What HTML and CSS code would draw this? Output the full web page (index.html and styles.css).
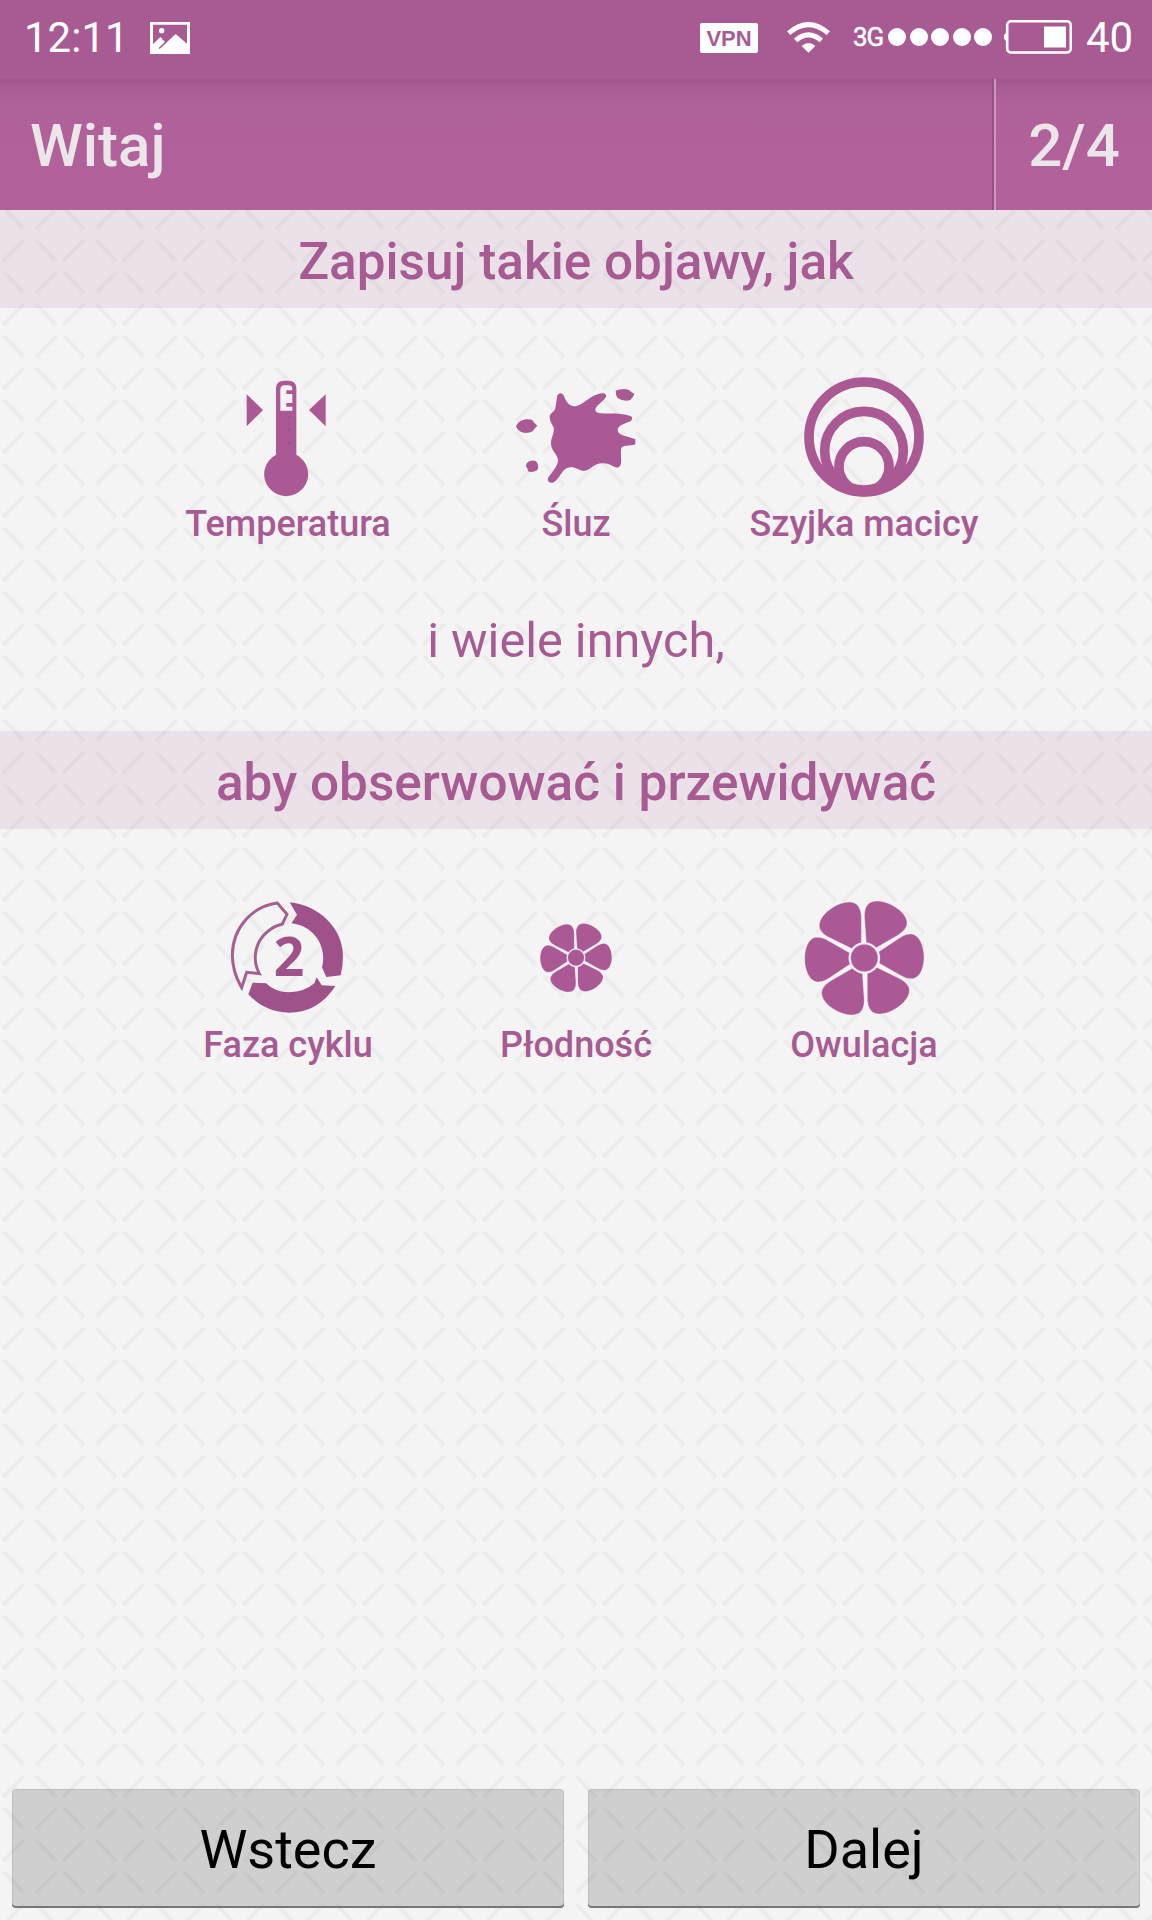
FILE: index.html
```html
<!DOCTYPE html>
<html lang="pl">
<head>
    <meta charset="UTF-8">
    <title>Witaj</title>
    <link rel="stylesheet" href="styles.css">
</head>
<body>
    <div class="status">
        <span class="time">12:11</span>
        <svg class="pic" viewBox="0 0 120 96">
            <path fill="#fff" fill-rule="evenodd" d="M0 0H120V96H0ZM9 8V67L31 45L38 51L33 56L38 53L45 59L26 78L29 81L77 36L111 65V8Z"/>
            <circle cx="35" cy="26" r="8" fill="#fff"/>
        </svg>
        <span class="vpn">VPN</span>
        <svg class="wifi" viewBox="0 0 130 94">
            <g fill="none" stroke="#fff" stroke-width="15">
                <path d="M5 34Q65 -18 125 34"/>
                <path d="M26 56Q65 22 104 56"/>
            </g>
            <path fill="#fff" d="M44 73Q65 55 86 73L65 93Z"/>
        </svg>
        <span class="net">3G</span>
        <span class="dots"><i></i><i></i><i></i><i></i><i></i></span>
        <svg class="battery" viewBox="0 0 68 34">
            <rect x="3.2" y="1.2" width="63.6" height="31.3" rx="4" fill="none" stroke="#fff" stroke-width="2.6"/>
            <path fill="#fff" d="M2 13V21L0 19V15ZM40 6.500H62V27.500H40Z"/>
        </svg>
        <span class="level">40</span>
    </div>
    <div class="bar">
        <h1>Witaj</h1>
        <span class="page">2/4</span>
    </div>
    <div class="content">
        <h2>Zapisuj takie objawy, jak</h2>
        <ul class="items">
            <li>
                <svg viewBox="144 51 360 360">
                    <path fill="#ab5994" d="M200 103L249 150L200 199ZM437 103L387 150L437 199ZM288 284V84Q289 62 312 62H325Q348 62 349 84V284A66 66 0 1 1 288 284Z"/>
                    <path fill="#f7f2f6" d="M301 152V88Q302 76 314 76H325Q337 76 337 88V91H319V102H337V129H319V140H337V152Z"/>
                    <path stroke="#8f5a82" stroke-width="7" d="M322 172H333M322 210H333M322 248H333"/>
                </svg>
                <span>Temperatura</span>
            </li>
            <li>
                <svg viewBox="48 51 360 360">
                    <g fill="#ab5994">
                        <path d="M172 106Q182 94 191 106C198 124 205 137 222 139C250 139 264 107 305 100Q320 99 318 110C310 126 285 136 286 151Q288 160 303 160C330 162 365 157 393 169Q400 175 393 182C380 190 352 194 353 211C356 229 384 228 406 238V253C390 261 364 251 363 270C361 290 370 319 353 323C337 321 332 310 309 310C279 310 273 331 251 333C232 330 229 321 210 322C184 325 181 357 159 368Q145 371 143 357C151 340 176 320 174 298C168 279 153 271 153 250C153 232 164 221 161 202C154 189 149 184 149 168C153 157 164 156 166 144Z"/>
                        <path d="M48 199C55 181 75 174 96 179Q101 187 112 197Q103 205 98 214C79 223 56 220 48 199Z"/>
                        <path d="M80 310Q91 297 108 304Q119 315 112 330Q98 339 84 334Q83 325 78 319Z"/>
                        <path d="M347 92Q369 83 387 90Q394 98 403 101Q399 113 391 120Q370 126 352 113Q347 105 347 92Z"/>
                    </g>
                </svg>
                <span>Śluz</span>
            </li>
            <li>
                <svg viewBox="192 51 360 360">
                    <g fill="none" stroke="#ab5994" stroke-width="29">
                        <circle cx="372" cy="231" r="165"/>
                        <circle cx="372" cy="272" r="118"/>
                        <circle cx="372" cy="320" r="75"/>
                    </g>
                    <path fill="#ab5994" d="M228 305L258 335L302 338A72 72 0 0 0 442 338L486 335L516 305L480 370L420 400H324L264 370Z"/>
                </svg>
                <span>Szyjka macicy</span>
            </li>
        </ul>
        <p>i wiele innych,</p>
        <h2>aby obserwować i przewidywać</h2>
        <ul class="items">
            <li>
                <svg viewBox="114 54 360 360">
                    <path fill="#9f5189" d="M299 67C385 76 458 142 459 228Q459 260 452 286L409 291L396 262Q401 245 399 225C396 175 355 135 304 130L321 104ZM188 308L228 310Q255 337 297 337Q345 335 373 310L380 292L395 316L436 318C400 375 350 398 297 398C245 396 205 375 175 343Z"/>
                    <path fill="none" stroke="#a5608f" stroke-width="9" d="M262 69C190 78 128 140 127 225Q127 275 155 323L170 277L208 281Q194 255 196 225C200 180 230 145 277 132L291 103Z"/>
                    <text x="297" y="288" text-anchor="middle">2</text>
                </svg>
                <span>Faza cyklu</span>
            </li>
            <li>
                <svg viewBox="-300 -299 600 600">
                    <defs>
                        <path id="petal" d="M44 -17L105 -55Q126 -69 144 -67C168 -63 179 -30 179 0C179 30 168 63 144 67Q126 69 105 55L44 17Q50 0 44 -17Z"/>
                        <g id="flower" fill="#ab5994" stroke="#f8eef6" stroke-width="1">
                            <use href="#petal" transform="rotate(-2)"/>
                            <use href="#petal" transform="rotate(58)"/>
                            <use href="#petal" transform="rotate(118)"/>
                            <use href="#petal" transform="rotate(178)"/>
                            <use href="#petal" transform="rotate(238)"/>
                            <use href="#petal" transform="rotate(298)"/>
                            <circle r="41"/>
                        </g>
                    </defs>
                    <use href="#flower"/>
                </svg>
                <span>Płodność</span>
            </li>
            <li>
                <svg viewBox="-181 -180 360 360"><use href="#flower"/></svg>
                <span>Owulacja</span>
            </li>
        </ul>
    </div>
    <div class="buttons">
        <button>Wstecz</button>
        <button>Dalej</button>
    </div>
</body>
</html>
```
FILE: styles.css
```css
* {
    margin: 0;
    padding: 0;
    box-sizing: border-box;
    list-style: none;
}
body{
    width: 1152px;
    height: 1920px;
    display: flex;
    flex-direction: column;
    overflow: hidden;
    font-family: Roboto, sans-serif;
    color: #a85a93;
    background: #f4f4f4 url("data:image/svg+xml,%3Csvg xmlns='http://www.w3.org/2000/svg' width='60' height='64'%3E%3Cpath d='M4 4L24 25M57 4L36 25M24 36L3 57M36 36L56 57' stroke='%23ececec' stroke-width='4' fill='none'/%3E%3C/svg%3E") 0 12px;
}
/* 状态栏 */
.status{
    height: 79px;
    flex: none;
    display: flex;
    align-items: center;
    padding: 0 20px 5px 24px;
    background: #a85b92;
    color: #fff;
}
.time{
    font-size: 42px;
    width: 126px;
}
.pic{
    width: 40px;
    height: 32px;
    margin-top: 2px;
}
.vpn{
    width: 58px;
    height: 30px;
    line-height: 31px;
    margin-left: auto;
    margin-top: 2px;
    border-radius: 2px;
    background: #fff;
    color: #a85b92;
    font-family: "Liberation Sans", sans-serif;
    font-weight: bold;
    font-size: 22px;
    text-align: center;
}
.wifi{
    width: 43px;
    height: 31px;
    margin-left: 29px;
}
.net{
    width: 35px;
    margin-left: 23px;
    font-size: 26px;
    letter-spacing: -1px;
    -webkit-text-stroke: .5px #fff;
}
.dots{
    display: flex;
    gap: 3.500px;
}
.dots i{
    width: 18px;
    height: 18px;
    border-radius: 50%;
    background: #fff;
}
.battery{
    width: 68px;
    height: 34px;
    margin-left: 12px;
}
.level{
    width: 46px;
    margin-left: 14px;
    font-size: 42px;
}
/* 标题栏 */
.bar{
    height: 131px;
    flex: none;
    display: flex;
    align-items: center;
    background: linear-gradient(#a2568c, #a95c93 9px, #b1619a 26px, #b1619a 40px, #b2619b);
    color: #eae6ea;
    font-size: 60px;
    font-weight: 500;
}
.bar h1{
    flex: 1;
    padding: 2px 0 0 30px;
    font-size: 60px;
    font-weight: 500;
}
.page{
    width: 158px;
    height: 131px;
    line-height: 133px;
    text-align: center;
    border-left: 2px solid #cf97c0;
    box-shadow: -2px 0 0 #8f5380;
}
.content{
    flex: 1;
}
.content h2{
    height: 98px;
    line-height: 104px;
    background: rgba(171, 89, 148, .12);
    text-align: center;
    font-size: 51.300px;
    font-weight: 500;
}
.items{
    display: flex;
    justify-content: center;
    padding-top: 69px;
}
.items li{
    width: 288px;
    display: flex;
    flex-direction: column;
    align-items: center;
}
.items svg{
    width: 120px;
    height: 120px;
}
.items text{
    font: bold 160px "Open Sans", sans-serif;
    fill: #9f5189;
}
.items span{
    height: 54px;
    line-height: 55px;
    font-size: 36px;
    font-weight: 500;
}
.content p{
    height: 180px;
    line-height: 180px;
    text-align: center;
    font-size: 48.600px;
}
/* 底部按钮 */
.buttons{
    flex: none;
    display: flex;
    gap: 24px;
    padding: 0 12px 12px;
}
.buttons button{
    flex: 1;
    height: 119px;
    padding-top: 2px;
    border: 0;
    border-radius: 4px;
    background: rgba(0, 0, 0, .15);
    box-shadow: inset 0 -2px 0 #777, inset 0 0 0 1px rgba(0, 0, 0, .08);
    font-family: Roboto, sans-serif;
    font-size: 54px;
    color: #000;
}
```
